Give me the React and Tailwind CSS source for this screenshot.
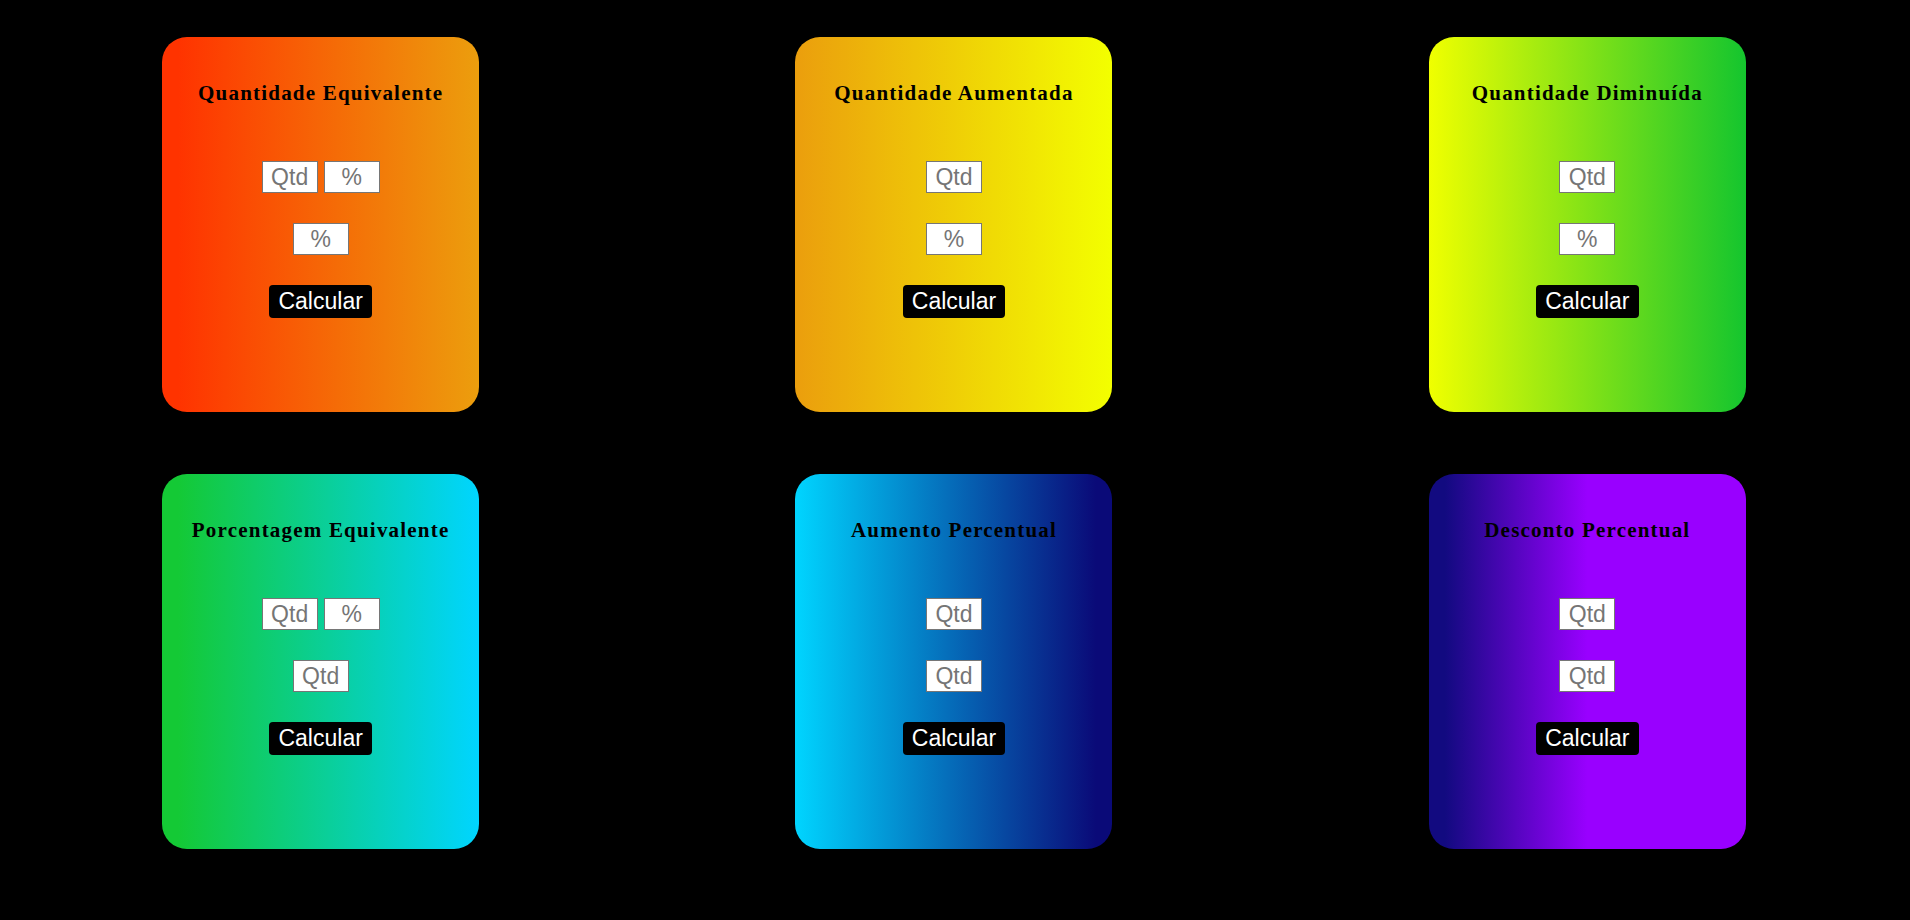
const cards = [
  {
    title: "Quantidade Equivalente",
    bg: "bg-[linear-gradient(to_right,#ff3300_5%,#ec9e0d_100%)]",
    top: ["Qtd", "%"],
    bottom: "%",
  },
  {
    title: "Quantidade Aumentada",
    bg: "bg-[linear-gradient(to_right,#eb9e0d_0%,#f3ff00_100%)]",
    top: ["Qtd"],
    bottom: "%",
  },
  {
    title: "Quantidade Diminuída",
    bg: "bg-[linear-gradient(to_right,#f0ff00_0%,#14c52e_100%)]",
    top: ["Qtd"],
    bottom: "%",
  },
  {
    title: "Porcentagem Equivalente",
    bg: "bg-[linear-gradient(to_right,#14c935_5%,#00d5ff_100%)]",
    top: ["Qtd", "%"],
    bottom: "Qtd",
  },
  {
    title: "Aumento Percentual",
    bg: "bg-[linear-gradient(to_right,#00d5ff_0%,#0a0a78_95%)]",
    top: ["Qtd"],
    bottom: "Qtd",
  },
  {
    title: "Desconto Percentual",
    bg: "bg-[linear-gradient(to_right,#120a80_5%,#9900ff_50%)]",
    top: ["Qtd"],
    bottom: "Qtd",
  },
];

const Campo = ({ placeholder }) => (
  <input
    type="text"
    placeholder={placeholder}
    className="w-[56px] h-[32px] bg-white border border-[#767676] text-center text-[23px] text-black placeholder:text-[#757575] outline-none font-['Liberation_Sans',Arial,sans-serif]"
  />
);

const Cartao = ({ card }) => (
  <div
    className={`w-[317px] h-[375px] rounded-[25px] flex flex-col items-center ${card.bg}`}
  >
    <h2 className="mt-[44px] h-[24px] leading-[24px] text-[21px] font-bold tracking-[1.2px] text-black font-['Liberation_Serif','Times_New_Roman',serif]">
      {card.title}
    </h2>
    <div className="mt-[56px] flex gap-[6px]">
      {card.top.map((p, i) => (
        <Campo key={i} placeholder={p} />
      ))}
    </div>
    <div className="mt-[30px]">
      <Campo placeholder={card.bottom} />
    </div>
    <button className="mt-[30px] h-[33px] px-[9px] rounded-[4px] bg-black text-white text-[23px] leading-none font-['Liberation_Sans',Arial,sans-serif]">
      Calcular
    </button>
  </div>
);

export default function App() {
  return (
    <div className="min-h-screen bg-black pl-[4px] pr-[6px] pt-[37px]">
      <div className="grid grid-cols-3 gap-y-[62px]">
        {cards.map((c, i) => (
          <div key={i} className="flex justify-center">
            <Cartao card={c} />
          </div>
        ))}
      </div>
    </div>
  );
}
